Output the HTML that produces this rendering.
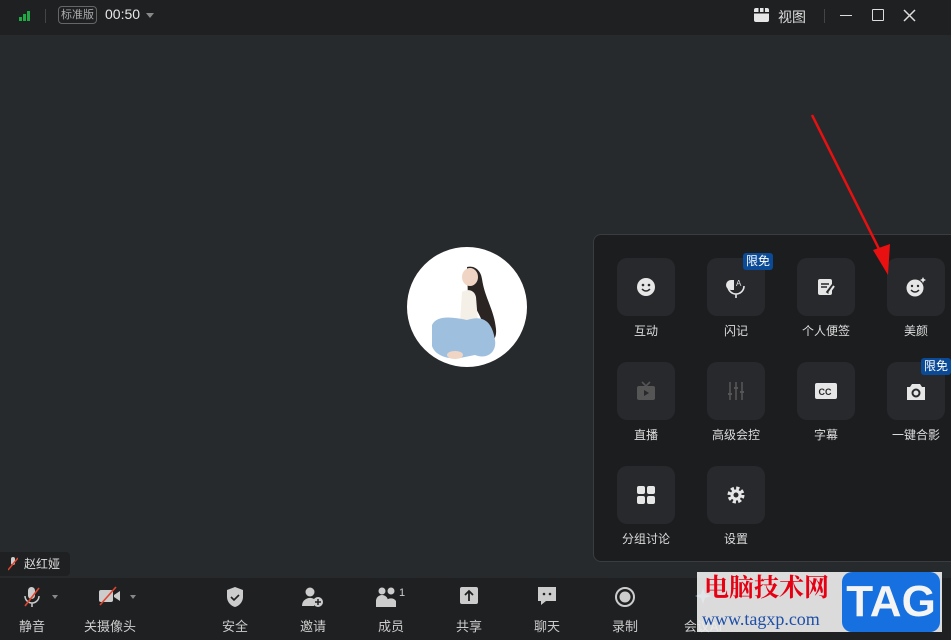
<!DOCTYPE html>
<html><head><meta charset="utf-8"><style>
*{margin:0;padding:0;box-sizing:border-box}
body{width:951px;height:640px;overflow:hidden;background:#272a2c;font-family:"Liberation Sans","Noto Sans CJK SC",sans-serif;position:relative;color:#ddd}
.top{position:absolute;left:0;top:0;width:951px;height:35px;background:#1f2022}
.main{position:absolute;left:0;top:35px;width:951px;height:543px;background:#272a2c}
.bar{position:absolute;left:0;top:578px;width:951px;height:62px;background:#1f2022}
.panel{position:absolute;left:593px;top:234px;width:370px;height:328px;background:#1c1d1f;border:1px solid #3a3c3f;border-radius:8px}
.tile{position:absolute;width:58px;height:58px;background:#28292c;border-radius:10px;display:flex;align-items:center;justify-content:center}
.lab{position:absolute;width:90px;text-align:center;font-size:12px;color:#ddd}
.badge{position:absolute;background:#0a4a96;color:#fff;font-size:12px;padding:0 3px;border-radius:3px;line-height:17px}
.tb{position:absolute;top:586px;width:70px;text-align:center}
.tb .l{position:absolute;top:30px;width:70px;text-align:center;font-size:13px;color:#ccc}
.tb svg{display:block;margin:0 auto}
</style></head><body>
<div class="top">
 <svg style="position:absolute;left:19px;top:11px" width="12" height="10"><rect x="0" y="6" width="3" height="4" fill="#1fa843"/><rect x="4" y="3" width="3" height="7" fill="#1fa843"/><rect x="8" y="0" width="3" height="10" fill="#1fa843"/></svg>
 <div style="position:absolute;left:45px;top:9px;width:1px;height:14px;background:#444"></div>
 <div style="position:absolute;left:58px;top:6px;width:39px;height:18px;border:1px solid #666;border-radius:4px;font-size:11px;color:#aaa;text-align:center;line-height:16px">标准版</div>
 <div style="position:absolute;left:105px;top:6px;font-size:14px;color:#e8e8e8">00:50</div>
 <div style="position:absolute;left:146px;top:13px;border-left:4px solid transparent;border-right:4px solid transparent;border-top:5px solid #888"></div>
 <svg style="position:absolute;left:754px;top:8px" width="15" height="14"><rect x="0" y="0" width="15" height="14" rx="2" fill="#e6e6e6"/><rect x="0" y="4" width="15" height="1.5" fill="#1f2022"/><rect x="4.5" y="0" width="1.5" height="4" fill="#1f2022"/><rect x="9.5" y="0" width="1.5" height="4" fill="#1f2022"/></svg>
 <div style="position:absolute;left:778px;top:7px;font-size:14px;color:#ddd">视图</div>
 <div style="position:absolute;left:824px;top:9px;width:1px;height:14px;background:#444"></div>
 <div style="position:absolute;left:840px;top:15px;width:12px;height:1px;background:#ddd"></div>
 <div style="position:absolute;left:872px;top:9px;width:12px;height:12px;border:1.5px solid #ddd;border-radius:1px"></div>
 <svg style="position:absolute;left:903px;top:9px" width="13" height="13"><path d="M1 1L12 12M12 1L1 12" stroke="#ddd" stroke-width="1.5"/></svg>
</div>
<div class="main">
 <div style="position:absolute;left:407px;top:212px;width:120px;height:120px;border-radius:50%;background:#fff;overflow:hidden">
  <svg width="120" height="120"><path d="M60 20c8-2 14 4 15 12 3 20 12 30 14 50 1 10-4 14-8 10-6-20-10-30-20-40z" fill="#2a2422"/><ellipse cx="63" cy="30" rx="8" ry="9" fill="#f0d5c5"/><path d="M55 45c5-3 12-3 14 5l2 25h-18z" fill="#f4f0e8"/><path d="M25 78c5-10 20-8 35-5 15-5 25 0 28 20 2 12-8 20-20 15l-15 3c-10 2-25-2-28-12z" fill="#9ec0de"/><ellipse cx="48" cy="108" rx="8" ry="4" fill="#f0d5c5"/></svg>
 </div>
 <div style="position:absolute;left:0;top:517px;width:70px;height:24px;background:#1f2022;border-radius:0 4px 4px 0;font-size:12px;color:#ddd;line-height:24px;padding-left:24px">赵红娅
  <svg style="position:absolute;left:8px;top:5px" width="10" height="14"><rect x="3" y="0" width="4" height="8" rx="2" fill="#ccc"/><path d="M0 13L10 1" stroke="#e0452f" stroke-width="1.5"/></svg></div>
</div>
<div class="panel">
 <div class="tile" style="left:23px;top:23px"><svg width="20" height="20"><circle cx="10" cy="10" r="9" fill="#e6e6e6"/><circle cx="7" cy="8" r="1.3" fill="#28292c"/><circle cx="13" cy="8" r="1.3" fill="#28292c"/><path d="M6 12q4 4 8 0" stroke="#28292c" stroke-width="1.5" fill="none"/></svg></div>
 <div class="tile" style="left:113px;top:23px"><svg width="20" height="22"><path d="M5 4a5 5 0 0 0 0 10h3v-10z" fill="#e6e6e6"/><path d="M2 10a8 8 0 0 0 16 0M10 18v4" stroke="#e6e6e6" stroke-width="1.6" fill="none"/><text x="10" y="10" font-size="8" fill="#e6e6e6" font-family="Liberation Sans">A</text></svg></div>
 <div class="tile" style="left:203px;top:23px"><svg width="20" height="20"><rect x="2" y="2" width="14" height="16" rx="2" fill="#e6e6e6"/><path d="M5 7h8M5 10h6" stroke="#28292c" stroke-width="1.5"/><path d="M17 8l-6 8" stroke="#28292c" stroke-width="3"/><path d="M18 9l-5 7" stroke="#e6e6e6" stroke-width="2"/></svg></div>
 <div class="tile" style="left:293px;top:23px"><svg width="22" height="22"><circle cx="10" cy="12" r="8.5" fill="#e6e6e6"/><circle cx="7" cy="10" r="1.2" fill="#28292c"/><circle cx="13" cy="10" r="1.2" fill="#28292c"/><path d="M6 14q4 4 8 0" stroke="#28292c" stroke-width="1.5" fill="none"/><path d="M18 1l1 2 2 1-2 1-1 2-1-2-2-1 2-1z" fill="#e6e6e6"/></svg></div>
 <div class="lab" style="left:7px;top:87px">互动</div>
 <div class="lab" style="left:97px;top:87px">闪记</div>
 <div class="lab" style="left:187px;top:87px">个人便签</div>
 <div class="lab" style="left:277px;top:87px">美颜</div>
 <div class="badge" style="left:149px;top:18px">限免</div>
 <div class="tile" style="left:23px;top:127px"><svg width="20" height="20"><rect x="1" y="5" width="18" height="14" rx="2" fill="#555"/><path d="M6 1l4 4 4-4" stroke="#555" stroke-width="1.6" fill="none"/><path d="M8 9l5 3-5 3z" fill="#28292c"/></svg></div>
 <div class="tile" style="left:113px;top:127px"><svg width="20" height="20" stroke="#555" stroke-width="1.6"><path d="M4 1v18M10 1v18M16 1v18"/><path d="M2 13h4M8 7h4M14 11h4" stroke-width="2"/></svg></div>
 <div class="tile" style="left:203px;top:127px"><svg width="22" height="16"><rect x="0" y="0" width="22" height="16" rx="2" fill="#e6e6e6"/><text x="3.5" y="12" font-size="9" font-weight="bold" fill="#28292c" font-family="Liberation Sans">CC</text></svg></div>
 <div class="tile" style="left:293px;top:127px"><svg width="20" height="18"><path d="M6 2h8l2 3h3v13H1V5h3z" fill="#e6e6e6"/><circle cx="10" cy="11" r="3.5" fill="none" stroke="#28292c" stroke-width="2"/></svg></div>
 <div class="lab" style="left:7px;top:191px">直播</div>
 <div class="lab" style="left:97px;top:191px">高级会控</div>
 <div class="lab" style="left:187px;top:191px">字幕</div>
 <div class="lab" style="left:277px;top:191px">一键合影</div>
 <div class="badge" style="left:327px;top:123px">限免</div>
 <div class="tile" style="left:23px;top:231px"><svg width="20" height="20" fill="#e6e6e6"><rect x="1" y="1" width="8" height="8" rx="2"/><rect x="11" y="1" width="8" height="8" rx="2"/><rect x="1" y="11" width="8" height="8" rx="2"/><rect x="11" y="11" width="8" height="8" rx="2"/></svg></div>
 <div class="tile" style="left:113px;top:231px"><svg width="20" height="20"><circle cx="10" cy="10" r="6.5" fill="none" stroke="#e6e6e6" stroke-width="4" stroke-dasharray="3 2.1"/><circle cx="10" cy="10" r="5.5" fill="#e6e6e6"/><circle cx="10" cy="10" r="2.5" fill="#28292c"/></svg></div>
 <div class="lab" style="left:7px;top:295px">分组讨论</div>
 <div class="lab" style="left:97px;top:295px">设置</div>
</div>
<svg style="position:absolute;left:800px;top:110px" width="100" height="175"><path d="M12 5L82 145" stroke="#e81010" stroke-width="2.5"/><path d="M73 140L88 165L90 134z" fill="#e81010"/></svg>
<div class="bar"></div>
<div class="tb" style="left:-3px"><svg width="20" height="22"><rect x="6" y="1" width="7" height="12" rx="3.5" fill="#ccc"/><path d="M3 10a7 7 0 0 0 14 0M10 17v4" stroke="#ccc" stroke-width="1.5" fill="none"/><path d="M3 20L17 2" stroke="#e0452f" stroke-width="1.6"/></svg><div class="l">静音</div></div>
<div style="position:absolute;left:52px;top:595px;border-left:3px solid transparent;border-right:3px solid transparent;border-top:4px solid #888"></div>
<div class="tb" style="left:75px"><svg width="24" height="20"><rect x="1" y="4" width="14" height="12" rx="2" fill="#ccc"/><path d="M16 9l6-4v10l-6-4z" fill="#ccc"/><path d="M2 19L18 1" stroke="#e0452f" stroke-width="1.6"/></svg><div class="l">关摄像头</div></div>
<div style="position:absolute;left:130px;top:595px;border-left:3px solid transparent;border-right:3px solid transparent;border-top:4px solid #888"></div>
<div class="tb" style="left:200px"><svg width="18" height="22"><path d="M9 1l8 3v7c0 5-4 9-8 10-4-1-8-5-8-10V4z" fill="#ccc"/><path d="M5 11l3 3 5-5" stroke="#1f2022" stroke-width="1.6" fill="none"/></svg><div class="l">安全</div></div>
<div class="tb" style="left:278px"><svg width="22" height="22"><circle cx="8" cy="6" r="4.5" fill="#ccc"/><path d="M0 20a8 8 0 0 1 12-7v7z" fill="#ccc"/><circle cx="16" cy="16" r="5" fill="#ccc"/><path d="M16 13v6M13 16h6" stroke="#1f2022" stroke-width="1.5"/></svg><div class="l">邀请</div></div>
<div class="tb" style="left:356px"><svg width="30" height="22"><circle cx="6" cy="5" r="3.5" fill="#ccc"/><circle cx="15" cy="5" r="3.5" fill="#ccc"/><path d="M0 21v-6a6 6 0 0 1 12 0v6zM10 21v-6a6 6 0 0 1 10 0v6z" fill="#ccc"/><text x="23" y="10" font-size="11" fill="#ccc" font-family="Liberation Sans">1</text></svg><div class="l">成员</div></div>
<div class="tb" style="left:434px"><svg width="20" height="20"><rect x="1" y="1" width="18" height="17" rx="2" fill="#ccc"/><path d="M10 15V6M6 9l4-4 4 4" stroke="#1f2022" stroke-width="1.8" fill="none"/></svg><div class="l">共享</div></div>
<div class="tb" style="left:512px"><svg width="20" height="20"><path d="M1 1h18v14H9l-5 4v-4H1z" fill="#ccc"/><circle cx="7" cy="8" r="1.3" fill="#1f2022"/><circle cx="13" cy="8" r="1.3" fill="#1f2022"/></svg><div class="l">聊天</div></div>
<div class="tb" style="left:590px"><svg width="22" height="22"><circle cx="11" cy="11" r="9" fill="none" stroke="#ccc" stroke-width="2"/><circle cx="11" cy="11" r="5.5" fill="#ccc"/></svg><div class="l">录制</div></div>
<div class="tb" style="left:668px"><svg width="20" height="20"><path d="M10 2l2 6 6 2-6 2-2 6-2-6-6-2 6-2z" fill="#6a9fd8"/></svg><div class="l">会议AI</div></div>
<div style="position:absolute;left:697px;top:572px;width:245px;height:60px;background:rgba(235,235,235,0.92)"></div>
<div style="position:absolute;left:704px;top:574px;font-size:25px;line-height:30px;font-weight:bold;color:#e60012;font-family:'Liberation Serif','Noto Serif CJK SC',serif">电脑技术网</div>
<div style="position:absolute;left:702px;top:609px;font-size:18px;line-height:20px;color:#1d4fa8;font-family:'Liberation Serif',serif">www.tagxp.com</div>
<div style="position:absolute;left:842px;top:572px;width:98px;height:60px;background:#1670e0;border-radius:10px;color:#f4f4f4;font-size:44px;font-weight:bold;text-align:center;line-height:60px;font-family:'Liberation Sans',sans-serif">TAG</div>
</body></html>
